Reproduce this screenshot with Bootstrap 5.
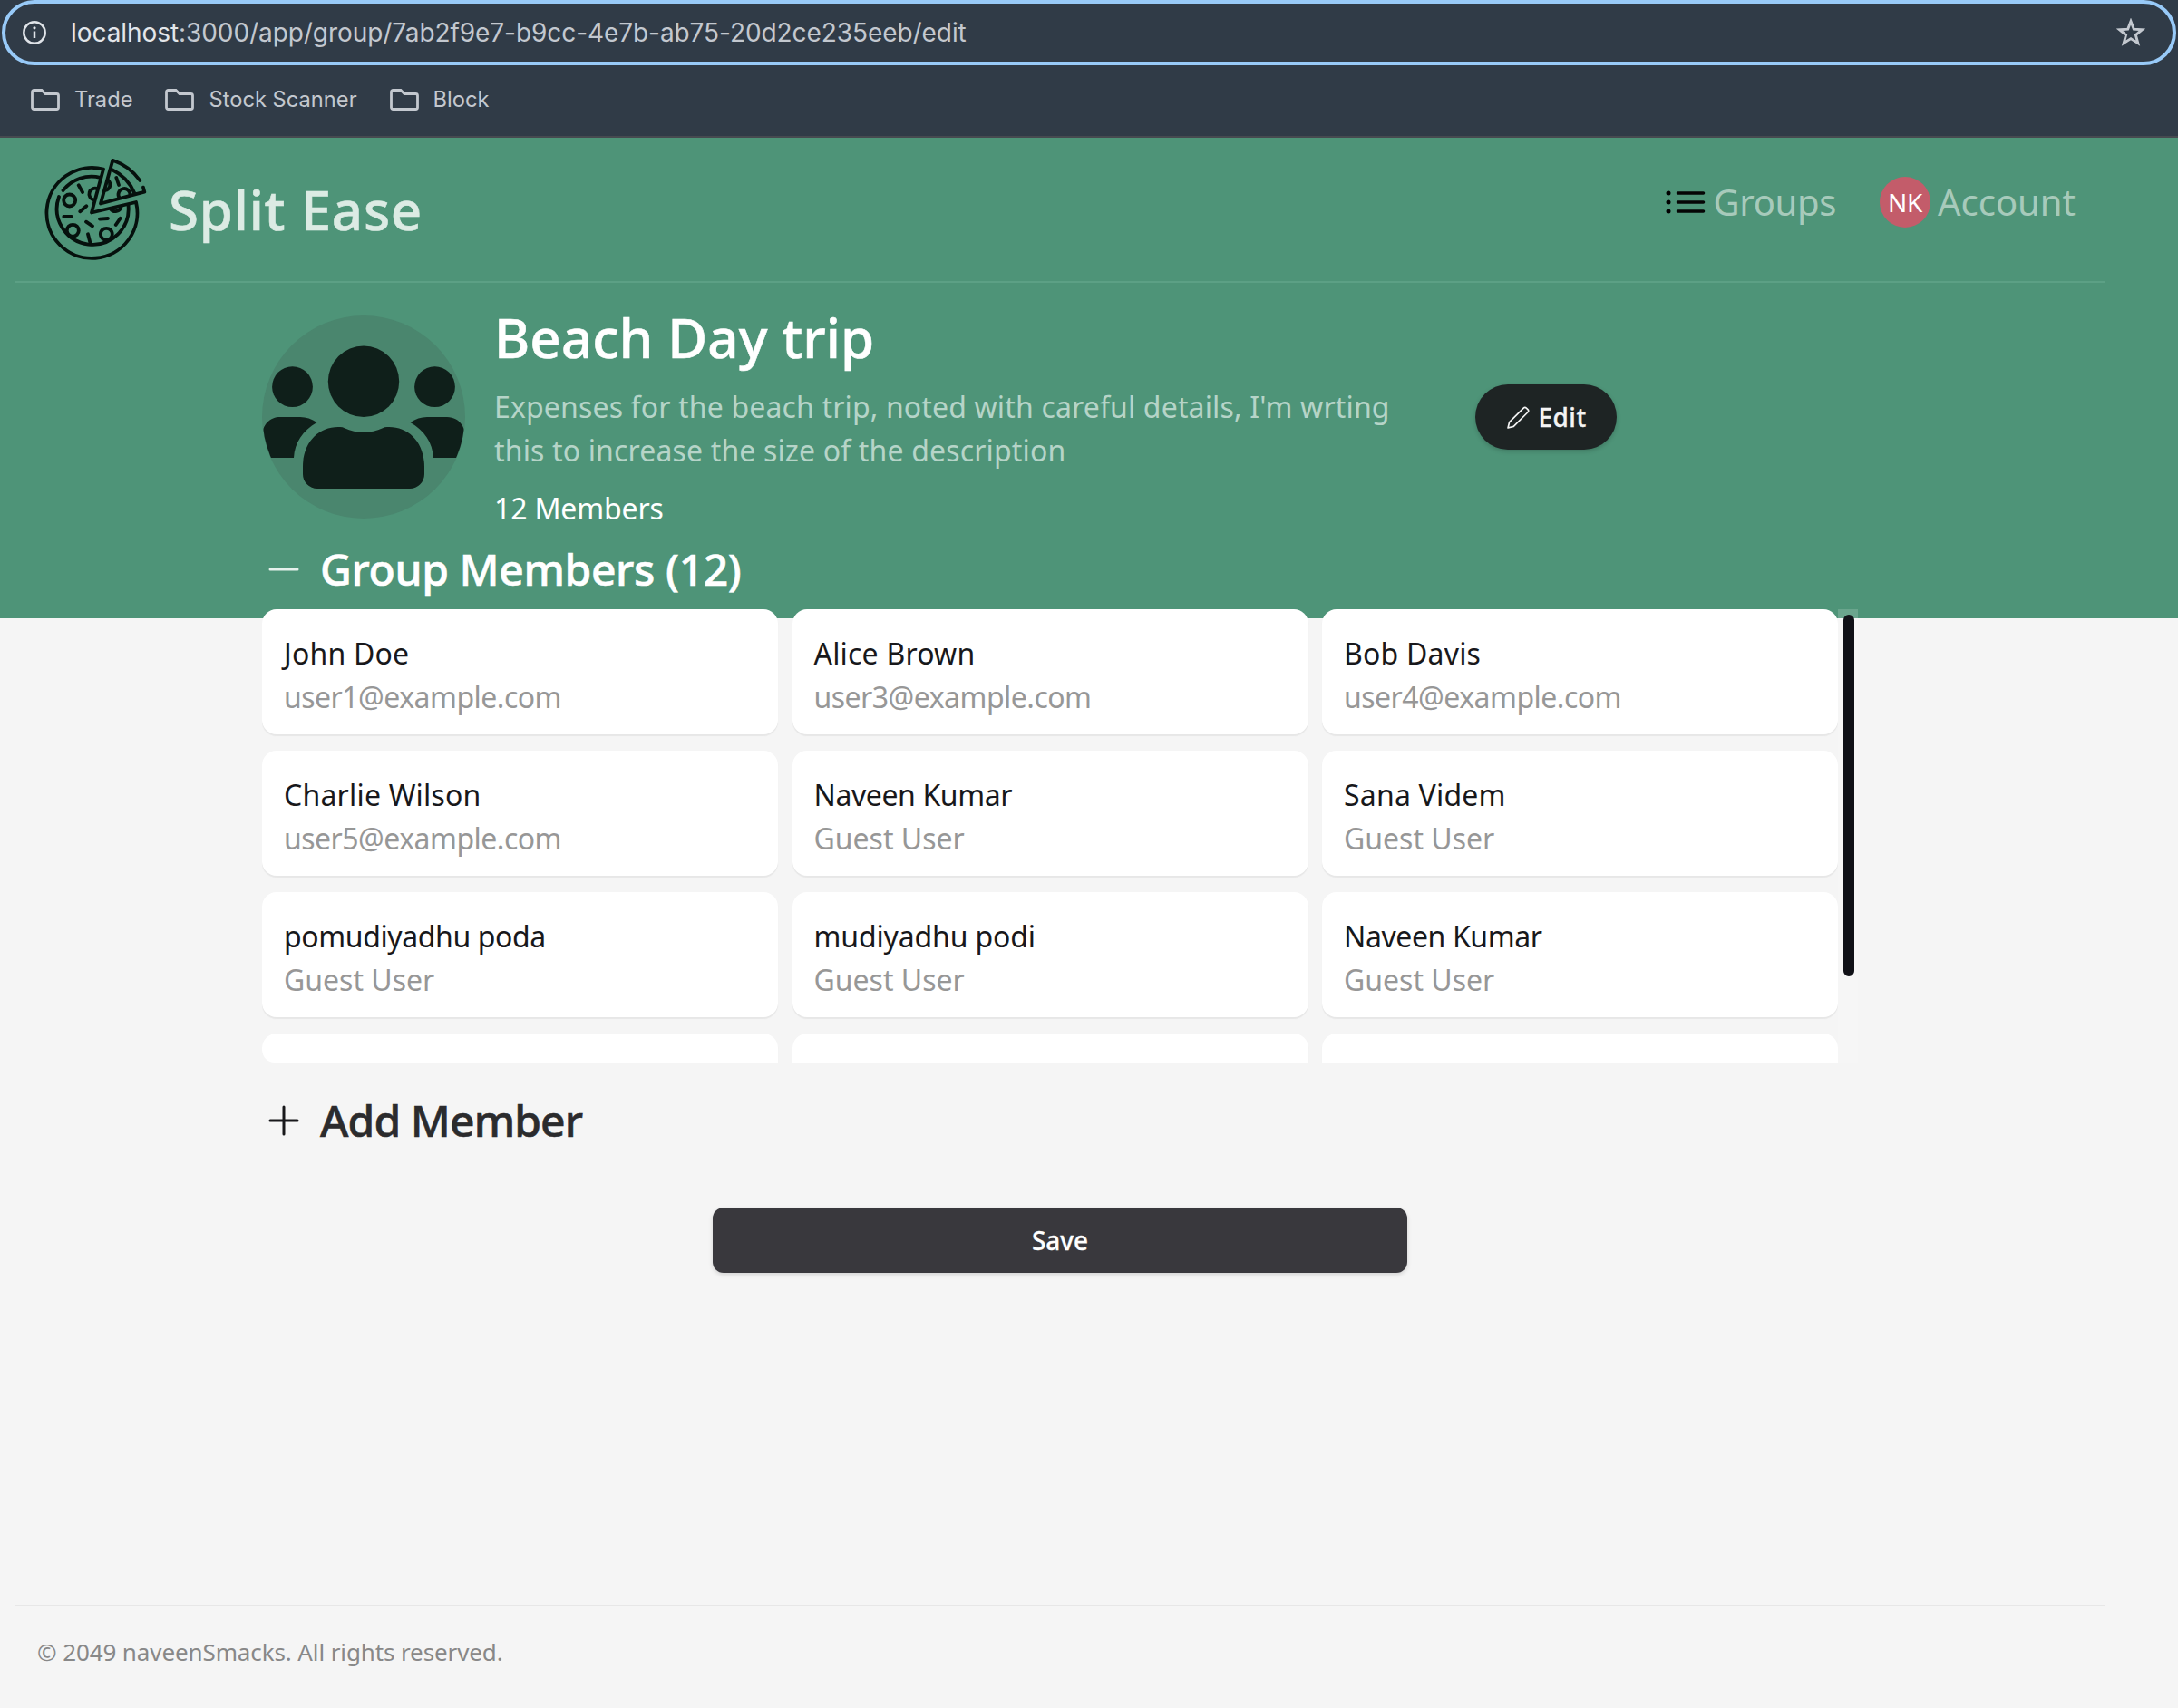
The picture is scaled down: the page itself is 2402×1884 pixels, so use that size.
<!DOCTYPE html>
<html lang="en">
<head>
<meta charset="utf-8">
<title>Split Ease</title>
<link href="https://cdn.jsdelivr.net/npm/bootstrap@5.3.0/dist/css/bootstrap.min.css" rel="stylesheet">
<style>
body{font-family:"Noto Sans","Open Sans",sans-serif;background:#f5f5f5;color:#18181b;font-size:32px;line-height:48px}
svg{display:block;flex:none}
.browser-top{height:152px;background:#303b47;border-bottom:2px solid #464a50;font-family:Inter,Roboto,sans-serif;color:#c3c8cf}
.address-bar{height:72px;margin:0 2px;border:4px solid #98caf8;border-radius:36px;padding:0 30px 0 19px;font-size:28px;line-height:64px}
.url-text{margin-left:27px;letter-spacing:-.07px}
.url-host{color:#e3e6ea}
.bookmark-bar{height:76px;padding-left:34px;font-size:23.7px;line-height:30px;gap:36px}
.bookmark-item{gap:16px}
.app-shell{height:1732px;background:linear-gradient(#4e9478 530px,#f5f5f5 530px)}
.app-inner{width:2304px;margin-left:17px;height:100%}
.top-nav{height:160px;border-bottom:2px solid #5ca085;padding:23px 32px 0 32px}
.brand-name,.trip-title,.section-title{-webkit-text-stroke:.6px currentColor}
.brand-name{font-size:60px;line-height:72px;font-weight:500;color:#dcebe4;margin:20px 0 0 23px;letter-spacing:.75px}
.nav-links{padding-top:20px}
.nav-entry{font-size:40px;line-height:56px;color:#a7cabb;height:56px}
.nav-groups{letter-spacing:-.35px}
.list-icon{margin-right:9px}
.initials{width:56px;height:56px;background:#c35c6a;color:#fff;font-size:28px;letter-spacing:-.3px;margin-right:8px}
.content-col{width:1760px;margin:0 auto;padding-top:36px}
.trip-text{margin:-6px 0 11px 32px}
.trip-title{font-size:60px;line-height:60px;font-weight:500;letter-spacing:.1px;margin:0 0 23px}
.trip-desc{color:#b6d4c8;width:1010px;letter-spacing:.15px}
.trip-count{margin-top:16px;letter-spacing:-.15px}
.edit-btn{width:156px;height:72px;border-radius:36px;background:#1e2424;color:#f4f4f4;font-size:28px;font-weight:500;line-height:40px;gap:9px;letter-spacing:.5px;padding-left:2px!important;margin:76px 0 0 72px;box-shadow:0 2px 5px rgba(0,0,0,.18)}
.edit-btn,.save-btn{-webkit-text-stroke:.3px currentColor}
.section-row{gap:16px}
.section-title{font-size:48px;line-height:64px;font-weight:500;letter-spacing:-.38px;margin:0}
.add-row{margin-top:32px}
.add-row .section-title{color:#2b2b2d;letter-spacing:-.9px}
.member-scroll{height:500px;margin-top:12px}
.member-grid{display:grid;grid-template-columns:repeat(3,1fr);gap:18px 15.5px;align-content:start;width:1738px;border-bottom-left-radius:14px}
.member-tile{height:138px;background:#fff;border-radius:16px;padding:24.500px 24px 0;box-shadow:0 2px 1px #e7e7e7}
.member-name{letter-spacing:.2px}
.name-tight{letter-spacing:-.4px}
.name-snug{letter-spacing:-.15px}
.member-mail{color:#979797}
.is-mail{letter-spacing:-.52px}
.track-col{width:22px;background:rgba(255,255,255,.16);padding:6px 4px 0 6px}
.track-thumb{width:12px;height:399px;border-radius:6px;background:#101117}
.save-btn{width:766px;height:72px;border-radius:12px;background:#39383d;color:#fff;font-size:28px;font-weight:500;margin-top:64px;box-shadow:0 2px 5px rgba(0,0,0,.14)}
.page-footer{border-top:2px solid #e7e7e7;height:114px;padding:32px 24px;font-size:26px;line-height:36px;letter-spacing:-.11px;color:#888}
</style>
</head>
<body>
<header class="browser-top">
  <div class="address-bar d-flex align-items-center">
    <svg width="26" height="26" viewBox="0 0 26 26"><circle cx="13" cy="13" r="11.7" fill="none" stroke="#dfe3e8" stroke-width="2.5"/><path d="M13 11.5v7.5" stroke="#dfe3e8" stroke-width="2.5"/><circle cx="13" cy="7.8" r="1.6" fill="#dfe3e8"/></svg>
    <span class="url-text"><span class="url-host">localhost</span>:3000/app/group/7ab2f9e7-b9cc-4e7b-ab75-20d2ce235eeb/edit</span>
    <svg class="ms-auto" width="32" height="32" viewBox="0 0 32 32"><path d="M16 3.500l3.300 8.700 9.200.5-7.100 5.900 2.400 9-7.800-5-7.800 5 2.400-9-7.100-5.900 9.200-.5z" fill="none" stroke="#c3c8cf" stroke-width="2.900"/></svg>
  </div>
  <div class="bookmark-bar d-flex align-items-center">
    <div class="bookmark-item d-flex align-items-center"><svg width="32" height="24" viewBox="0 0 32 24"><path d="M1.500 3.500a2 2 0 0 1 2-2H12l4 4h12.500a2 2 0 0 1 2 2v13a2 2 0 0 1-2 2h-25a2 2 0 0 1-2-2z" fill="none" stroke="#c3c8cf" stroke-width="2.800"/></svg><span>Trade</span></div>
    <div class="bookmark-item d-flex align-items-center"><svg width="32" height="24" viewBox="0 0 32 24"><path d="M1.500 3.500a2 2 0 0 1 2-2H12l4 4h12.500a2 2 0 0 1 2 2v13a2 2 0 0 1-2 2h-25a2 2 0 0 1-2-2z" fill="none" stroke="#c3c8cf" stroke-width="2.800"/></svg><span>Stock Scanner</span></div>
    <div class="bookmark-item d-flex align-items-center"><svg width="32" height="24" viewBox="0 0 32 24"><path d="M1.500 3.500a2 2 0 0 1 2-2H12l4 4h12.500a2 2 0 0 1 2 2v13a2 2 0 0 1-2 2h-25a2 2 0 0 1-2-2z" fill="none" stroke="#c3c8cf" stroke-width="2.800"/></svg><span>Block</span></div>
  </div>
</header>
<div class="app-shell">
<div class="app-inner d-flex flex-column">
  <nav class="top-nav d-flex align-items-start">
    <svg width="114" height="114" viewBox="0 0 114 114" fill="none" stroke="#06110d" stroke-width="3.800" stroke-linecap="round" stroke-linejoin="round">
      <path d="M65 11.500A50 50 0 1 0 101 48L52 59.500z"/>
      <path d="M61.500 20.800A40 40 0 0 0 20.500 35M16 42A39.500 39.500 0 1 0 92.500 51.500"/>
      <path d="M109 31.700l1.300 5L62 49.500 75.300 1.800A62 62 0 0 1 105.300 24"/>
      <path d="M74.700 12.300A50 50 0 0 1 99.300 38"/>
      <circle cx="27.700" cy="46" r="6.500"/><circle cx="31.300" cy="79.300" r="6.500"/><circle cx="68.300" cy="83.300" r="6.500"/>
      <path d="M58.500 33.200a6.500 6.500 0 1 0-4 12.300M70.500 24a6.500 6.500 0 0 1-3.500 11M82.500 43a6.500 6.500 0 1 1 12-3.200M73 55.500a6.500 6.500 0 0 0 11.500-2.500"/>
      <path d="M37.700 29.300L42 37M79.300 21l2.700 8M46.300 52.300l-7 6M21.300 64H30M46 69.700l7 4.600M61 66.700l9-.7M83.700 65.700l-5 7.300M48 83.300l2.300 9"/>
    </svg>
    <span class="brand-name">Split Ease</span>
    <div class="nav-links d-flex ms-auto">
      <div class="nav-entry d-flex align-items-center me-5">
        <svg class="list-icon" width="44" height="26" viewBox="0 0 44 26"><path d="M13.500 3h28M13.500 13h28M13.500 23h28" stroke="#050505" stroke-width="3.600" stroke-linecap="round"/><circle cx="3" cy="3" r="2.500"/><circle cx="3" cy="13" r="2.500"/><circle cx="3" cy="23" r="2.500"/></svg>
        <span class="nav-groups">Groups</span>
      </div>
      <div class="nav-entry d-flex align-items-center">
        <span class="initials rounded-circle d-flex align-items-center justify-content-center">NK</span>
        <span>Account</span>
      </div>
    </div>
  </nav>
  <main class="content-col flex-grow-1">
    <section class="d-flex align-items-start">
      <svg width="224" height="224" viewBox="0 0 224 224">
        <defs><clipPath id="disc"><circle cx="112" cy="112" r="111.500"/></clipPath></defs>
        <circle cx="112" cy="112" r="112" fill="#4a866e"/>
        <g fill="#0f1f1a" clip-path="url(#disc)">
          <circle cx="112" cy="72.700" r="39.200"/><circle cx="33.500" cy="78.700" r="22.400"/><circle cx="190.500" cy="78.700" r="22.400"/>
          <path d="M45 167C45 140 62 123 84 123h2q3 0 5 1.200 10 4.500 21 4.500t21-4.500q2-1.200 5-1.200h2c22 0 39 17 39 44v8a16 16 0 0 1-16 16H61a16 16 0 0 1-16-16z"/>
          <path d="M0 134c0-14 9-22 20-22h22q10 0 18.500 6C45 127 36 140 35 157H0z"/>
          <path d="M224 134c0-14-9-22-20-22h-22q-10 0-18.500 6C179 127 188 140 189 157h35z"/>
        </g>
      </svg>
      <div class="trip-text text-white">
        <h1 class="trip-title">Beach Day trip</h1>
        <div class="trip-desc">Expenses for the beach trip, noted with careful details, I'm wrting<br>this to increase the size of the description</div>
        <div class="trip-count">12 Members</div>
      </div>
      <button class="edit-btn btn d-flex align-items-center justify-content-center p-0">
        <svg width="25" height="25" viewBox="0 0 24 24" fill="none" stroke="#f4f4f4" stroke-width="1.600" stroke-linejoin="round"><path d="M1 23l1.500-6L17.500 2q1.500-1.500 3 0l1.500 1.500q1.500 1.500 0 3L7 21.500z"/></svg>
        <span>Edit</span>
      </button>
    </section>
    <div class="section-row d-flex align-items-center text-white">
      <svg width="48" height="48" viewBox="0 0 48 48"><path d="M9 24h30" stroke="#e6f1ec" stroke-width="3" stroke-linecap="round"/></svg>
      <h2 class="section-title">Group Members (12)</h2>
    </div>
    <section class="member-scroll d-flex overflow-hidden">
      <div class="member-grid overflow-hidden">
        <div class="member-tile"><div class="member-name">John Doe</div><div class="member-mail is-mail">user1@example.com</div></div>
        <div class="member-tile"><div class="member-name">Alice Brown</div><div class="member-mail is-mail">user3@example.com</div></div>
        <div class="member-tile"><div class="member-name">Bob Davis</div><div class="member-mail is-mail">user4@example.com</div></div>
        <div class="member-tile"><div class="member-name">Charlie Wilson</div><div class="member-mail is-mail">user5@example.com</div></div>
        <div class="member-tile"><div class="member-name name-tight">Naveen Kumar</div><div class="member-mail">Guest User</div></div>
        <div class="member-tile"><div class="member-name">Sana Videm</div><div class="member-mail">Guest User</div></div>
        <div class="member-tile"><div class="member-name name-tight">pomudiyadhu poda</div><div class="member-mail">Guest User</div></div>
        <div class="member-tile"><div class="member-name name-snug">mudiyadhu podi</div><div class="member-mail">Guest User</div></div>
        <div class="member-tile"><div class="member-name name-tight">Naveen Kumar</div><div class="member-mail">Guest User</div></div>
        <div class="member-tile"></div><div class="member-tile"></div><div class="member-tile"></div>
      </div>
      <div class="track-col"><div class="track-thumb"></div></div>
    </section>
    <div class="section-row add-row d-flex align-items-center">
      <svg width="48" height="48" viewBox="0 0 48 48"><path d="M9 24h30M24 9v30" stroke="#18181b" stroke-width="3" stroke-linecap="round"/></svg>
      <h2 class="section-title">Add Member</h2>
    </div>
    <button class="save-btn btn d-block mx-auto p-0">Save</button>
  </main>
  <footer class="page-footer">© 2049 naveenSmacks. All rights reserved.</footer>
</div>
</div>
<script src="https://cdn.jsdelivr.net/npm/bootstrap@5.3.0/dist/js/bootstrap.bundle.min.js"></script>
</body>
</html>
